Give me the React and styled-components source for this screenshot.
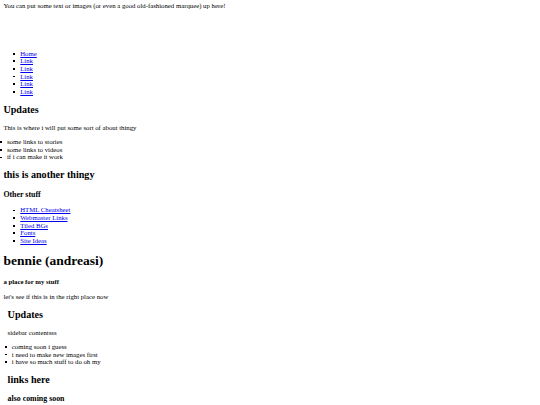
import styled, { createGlobalStyle } from 'styled-components';

// the reference is a plain 1280px page shrunk down to 540px
const s = n => `${(n * 0.421875).toFixed(3)}px`;

const GlobalStyle = createGlobalStyle`
    html, body {
        margin: 0;
        background: #ffffff;
    }
    body {
        font-family: "Liberation Serif", "Times New Roman", serif;
        font-size: ${s(16)};
        line-height: ${s(18)};
        color: #000000;
    }
`;

const Page = styled.div`
    padding: ${s(8)};

    a {
        color: #0000ee;
        text-decoration: underline;
    }
`;

const Header = styled.header`
    height: ${s(97)};
    margin-top: ${s(-3)};

    & > p {
        margin: 0;
    }
`;

const List = styled.ul`
    margin: ${props => s(props.$before ?? 16)} 0 ${s(16)};
    padding-left: ${props => s(props.$indent ?? 40)};
    list-style: none;
`;

const Item = styled.li`
    position: relative;

    &::before {
        content: '';
        position: absolute;
        left: -7px;
        top: 50%;
        width: 1.8px;
        height: 1.8px;
        margin-top: -0.7px;
        background: #000000;
    }
`;

const Heading = styled.h2`
    font-size: ${props => s(props.$size || 24)};
    line-height: 1.15;
    font-weight: bold;
    margin: ${props => s(props.$gap || 20)} 0 ${props => s(props.$after ?? props.$gap ?? 20)};
`;

const Text = styled.p`
    margin: ${s(16)} 0 ${props => s(props.$after ?? 16)};
`;

const Main = styled.main`
    display: block;
`;

const Sidebar = styled.aside`
    padding: 0 ${s(10)};
`;

const navLinks = ['Home', 'Link', 'Link', 'Link', 'Link', 'Link'];
const otherLinks = ['HTML Cheatsheet', 'Webmaster Links', 'Tiled BGs', 'Fonts', 'Site Ideas'];

const App = () => (
    <>
        <GlobalStyle />
        <Page>
            <Header>
                <p>You can put some text or images (or even a good old-fashioned marquee) up here!</p>
            </Header>
            <nav>
                <List>
                    {navLinks.map((label, i) => (
                        <Item key={i}><a href="#">{label}</a></Item>
                    ))}
                </List>
            </nav>
            <section>
                <Heading>Updates</Heading>
                <Text>This is where i will put some sort of about thingy</Text>
                <List $indent={8.5}>
                    <Item>some links to stories</Item>
                    <Item>some links to videos</Item>
                    <Item>if i can make it work</Item>
                </List>
                <Heading>this is another thingy</Heading>
                <Heading as="h3" $size={18.72} $gap={18.72}>Other stuff</Heading>
                <List>
                    {otherLinks.map(label => (
                        <Item key={label}><a href="#">{label}</a></Item>
                    ))}
                </List>
            </section>
            <Main>
                <Heading as="h1" $size={32} $gap={21.44}>bennie (andreasi)</Heading>
                <Heading as="h4" $size={16} $gap={21.28} $after={15}>a place for my stuff</Heading>
                <Text $after={15}>let's see if this is in the right place now</Text>
            </Main>
            <Sidebar>
                <Heading>Updates</Heading>
                <Text>sidebar contentsss</Text>
                <List $indent={10}>
                    <Item>coming soon i guess</Item>
                    <Item>i need to make new images first</Item>
                    <Item>i have so much stuff to do oh my</Item>
                </List>
                <Heading>links here</Heading>
                <Heading as="h3" $size={18.72} $gap={18.72}>also coming soon</Heading>
            </Sidebar>
        </Page>
    </>
);

export default App;
